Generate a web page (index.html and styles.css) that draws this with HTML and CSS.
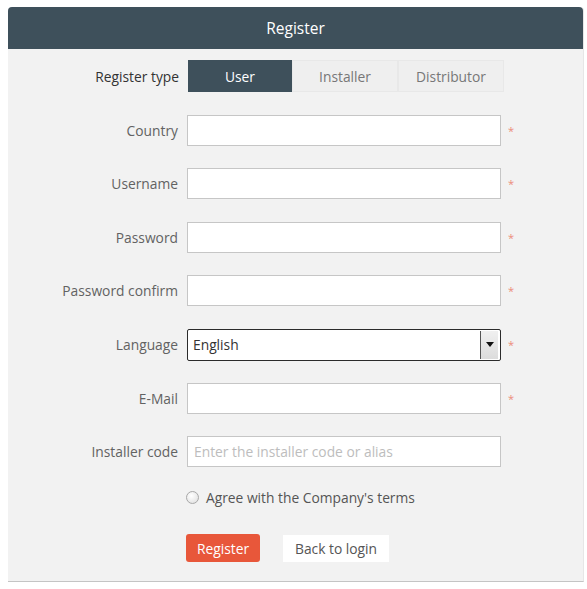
FILE: index.html
```html
<!DOCTYPE html>
<html lang="en">
<head>
<meta charset="utf-8">
<title>Register</title>
<link rel="stylesheet" href="styles.css">
</head>
<body>
<div class="card">
  <div class="card-header">Register</div>
  <div class="card-body">
    <div class="type-row">
      <div class="label">Register type</div>
      <div class="tabs">
        <div class="tab active">User</div>
        <div class="tab">Installer</div>
        <div class="tab">Distributor</div>
      </div>
    </div>
    <div class="form">
      <div class="label">Country</div>
      <div class="input"></div>
      <div class="req">*</div>

      <div class="label">Username</div>
      <div class="input"></div>
      <div class="req">*</div>

      <div class="label">Password</div>
      <div class="input"></div>
      <div class="req">*</div>

      <div class="label">Password confirm</div>
      <div class="input"></div>
      <div class="req">*</div>

      <div class="label">Language</div>
      <div class="input select"><span class="select-value">English</span><span class="select-btn"><span class="arrow"></span></span></div>
      <div class="req">*</div>

      <div class="label">E-Mail</div>
      <div class="input"></div>
      <div class="req">*</div>

      <div class="label">Installer code</div>
      <div class="input"><span class="placeholder">Enter the installer code or alias</span></div>
      <div class="req"></div>
    </div>
    <div class="agree-row">
      <span class="radio"></span>
      <span class="agree-text">Agree with the Company's terms</span>
    </div>
    <div class="buttons">
      <div class="btn btn-primary">Register</div>
      <div class="btn btn-default">Back to login</div>
    </div>
  </div>
</div>
</body>
</html>
```

FILE: styles.css
```css
html, body {
  margin: 0;
  padding: 0;
  background: #ffffff;
}
body {
  font-family: "Open Sans", "DejaVu Sans", sans-serif;
  font-size: 13.8px;
  color: #555;
}
.card {
  margin: 7px 0 0 8px;
  width: 576px;
  background: #f2f2f2;
  border-radius: 4px 4px 0 0;
  border-bottom: 1px solid #c4c4c4;
  border-right: 1px solid #e6e6e6;
  box-sizing: border-box;
}
.card-header {
  height: 42px;
  background: #3e505b;
  color: #fff;
  font-size: 15.5px;
  display: flex;
  align-items: center;
  justify-content: center;
  border-radius: 4px 4px 0 0;
}
.card-body {
  padding: 11px 0 19px 0;
}
.type-row {
  display: flex;
  align-items: center;
}
.type-row .label {
  width: 171px;
  margin-right: 9px;
  color: #333;
}
.label {
  text-align: right;
  color: #626262;
  box-sizing: border-box;
  white-space: nowrap;
}
.tabs {
  display: flex;
}
.tab {
  width: 104px;
  height: 32px;
  display: flex;
  align-items: center;
  justify-content: center;
  background: #efefef;
  border: 1px solid #e8e8e8;
  box-sizing: border-box;
  color: #777;
}
.tab + .tab { width: 106px; }
.tab.active {
  background: #3e505b;
  border-color: #3e505b;
  color: #fff;
}
.form {
  margin-top: 23px;
  display: grid;
  grid-template-columns: 170px 314px auto;
  column-gap: 9px;
  row-gap: 22.4px;
  align-items: center;
}
.input {
  height: 31px;
  background: #fff;
  border: 1px solid #c6c6c6;
  box-sizing: border-box;
  display: flex;
  align-items: center;
  padding-left: 6px;
}
.placeholder {
  color: #bdbdbd;
}
.select {
  border: 1px solid #2b2b2b;
  height: 32px;
  border-radius: 2px;
  padding-left: 5px;
  padding-right: 2px;
  justify-content: space-between;
}
.select-value { color: #333; }
.select-btn {
  width: 17px;
  height: 28px;
  background: linear-gradient(#f0f0f0, #dcdcdc);
  border-left: 1px solid #555;
  display: flex;
  align-items: center;
  justify-content: center;
}
.arrow {
  width: 0;
  height: 0;
  border-left: 4px solid transparent;
  border-right: 4px solid transparent;
  border-top: 5px solid #111;
}
.req {
  color: #ec8c7a;
  font-size: 11px;
  align-self: start;
  margin-top: 8px;
  margin-left: -2px;
}
.agree-row {
  margin-top: 21px;
  display: flex;
  align-items: center;
  padding-left: 178px;
  height: 18px;
}
.radio {
  width: 13px;
  height: 13px;
  border-radius: 50%;
  border: 1px solid #a8a8a8;
  background: radial-gradient(circle at 40% 35%, #fff, #dcdcdc);
  box-sizing: border-box;
  margin-right: 7px;
}
.agree-text { color: #555; }
.buttons {
  margin-top: 28px;
  display: flex;
  padding-left: 178px;
  gap: 23px;
  align-items: center;
}
.btn {
  height: 28px;
  display: flex;
  align-items: center;
  justify-content: center;
  box-sizing: border-box;
}
.btn-primary {
  width: 74px;
  background: #e8573a;
  color: #fff;
  border-radius: 3px;
}
.btn-default {
  width: 106px;
  background: #fff;
  color: #555;
  height: 27px;
}
```
